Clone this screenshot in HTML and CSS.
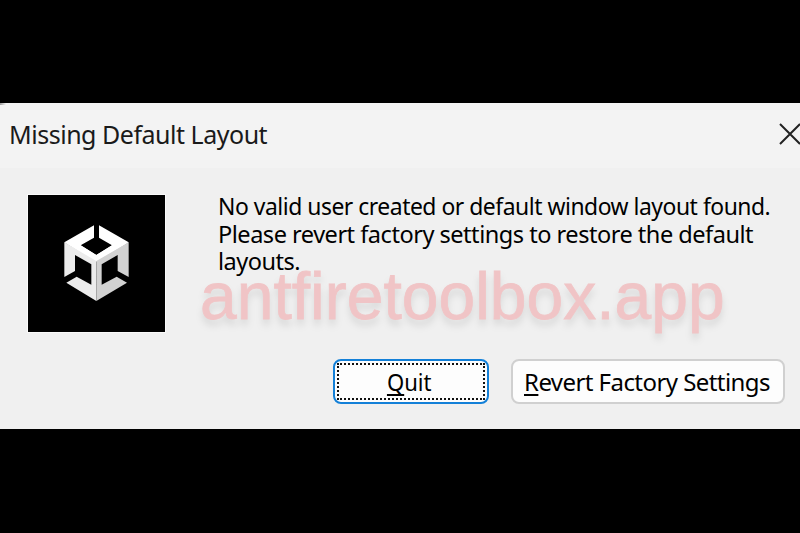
FILE: index.html
```html
<!DOCTYPE html>
<html lang="en">
<head>
<meta charset="utf-8">
<title>Missing Default Layout</title>
<link rel="stylesheet" href="styles.css">
</head>
<body>
<main class="dialog">
  <header class="titlebar">
    <h1 class="title">Missing Default Layout</h1>
    <svg class="close" viewBox="0 0 22 22" aria-label="Close"><path d="M1 1L21 21M21 1L1 21"/></svg>
  </header>
  <section class="content">
    <svg class="logo" viewBox="24 30 411 411" aria-hidden="true">
      <rect x="24" y="30" width="411" height="411" fill="#000"/>
      <path fill="#fff" d="M222 121V158L182 181L229 210L276 181L237 158V121L326 172L229 230L133 172Z"/>
      <path fill="#ececec" d="M133 172L229 225V348L139 293L170 275L214 299V238L165 210V258L133 276Z"/>
      <path fill="#d2d2d2" d="M326 172L229 225V348L321 293L290 275L245 299V238L293 210V258L326 276Z"/>
      <path fill="#fff" d="M133 172L182 181L229 210L276 181L326 172L229 228Z"/>
    </svg>
    <p class="message"><span class="line l1">No valid user created or default window layout found.</span><span class="line l2">Please revert factory settings to restore the default</span><span class="line l3">layouts.</span></p>
  </section>
  <footer class="actions">
    <button class="button primary"><span class="label quit"><u>Q</u>uit</span></button>
    <button class="button"><span class="label revert"><u>R</u>evert Factory Settings</span></button>
  </footer>
  <div class="watermark">antfiretoolbox.app</div>
</main>
</body>
</html>
```
FILE: styles.css
```css
* { box-sizing: border-box; }
body {
  margin: 0;
  height: 533px;
  padding-top: 103px;
  overflow: hidden;
  background: #000;
  color: #000;
  font-family: "Noto Sans", sans-serif;
}
.dialog {
  position: relative;
  height: 326px;
  overflow: hidden;
  background: #f0f0f0;
}
/* dark trace of the window's corner */
.dialog::before {
  content: "";
  position: absolute;
  left: 0;
  top: 0;
  width: 6px;
  height: 2px;
  background: linear-gradient(to right, #999, #f3f3f3);
}
.titlebar {
  display: flex;
  justify-content: space-between;
  height: 65px;
  padding: 18px 0 0 9px;
  background: #f3f3f3;
}
.title {
  margin: 0;
  font-size: 25px;
  font-weight: 400;
  line-height: 27px;
  letter-spacing: -0.48px;
  white-space: nowrap;
  color: #1a1a1a;
}
.close {
  flex: none;
  width: 22px;
  height: 22px;
  margin: 2px 0 0;
  margin-right: -1px;
  fill: none;
  stroke: #222;
  stroke-width: 2;
}
.content {
  display: flex;
  gap: 54px;
  padding: 27px 0 0 28px;
}
.logo {
  flex: none;
  width: 137px;
  height: 137px;
  outline: 1px solid #fafafa;
}
.message {
  margin: -3px 0 0 -1px;
  font-size: 24px;
  line-height: 27.7px;
  white-space: nowrap;
  letter-spacing: -0.5px;
}
.line {
  display: block;
  transform-origin: left center;
}
.l1 { transform: scaleX(0.954); }
.l2 { transform: scaleX(0.981); }
.l3 { transform: scaleX(0.98); }
.actions {
  display: flex;
  justify-content: flex-end;
  gap: 22px;
  padding: 27px 15px 0 0;
}
.button {
  position: relative;
  width: 274px;
  height: 45px;
  padding: 0;
  border: 2px solid #d0d0d0;
  border-radius: 8px;
  background: #fdfdfd;
  color: #000;
  font: 24px/28px "Noto Sans", sans-serif;
  white-space: nowrap;
}
.primary {
  width: 156px;
  border-color: #1380d8;
}
.primary::after {
  content: "";
  position: absolute;
  inset: 2px;
  border: 2px dotted #111;
}
.label {
  display: inline-block;
  padding-top: 1px;
}
.label u {
  text-decoration-thickness: 2px;
  text-underline-offset: 3px;
  text-decoration-skip-ink: none;
}
.quit { transform: translateX(-2px) scaleX(0.92); }
.revert { letter-spacing: -0.56px; transform: translateX(-1px); }
.watermark {
  position: absolute;
  left: 200px;
  top: 156px;
  font: 66px/74px "Liberation Sans", sans-serif;
  white-space: nowrap;
  color: #f29699;
  -webkit-text-stroke: 0.8px #f29699;
  text-shadow: 0 6px 7px rgba(0, 0, 0, 0.22);
  opacity: 0.48;
}
```
